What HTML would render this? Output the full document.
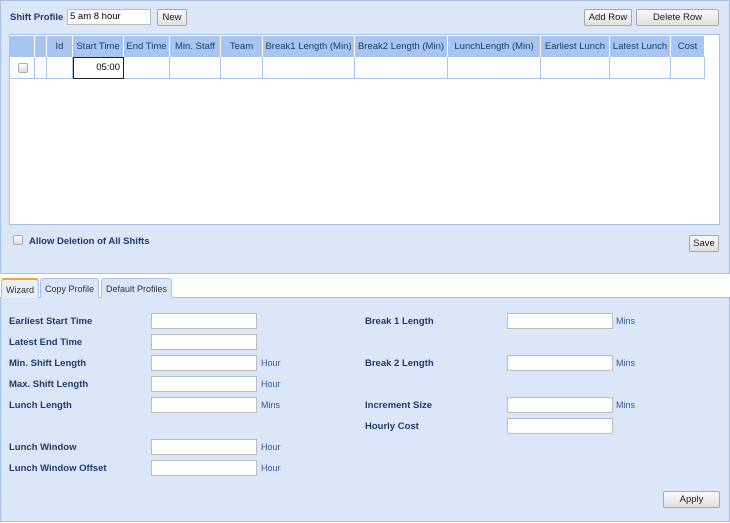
<!DOCTYPE html><html><head><style>
*{box-sizing:border-box}
body{margin:0;width:730px;height:523px;background:#fff;font-family:"Liberation Sans",Tahoma,sans-serif;font-size:9px;position:relative;overflow:hidden}
.a{position:absolute}
.p{background:#dbe6f8;border:1px solid #a7c0e6}
.lb{color:#1f3a6e;font-weight:bold;font-size:9.5px}
.u{color:#2e5a9a;font-size:9px}
.in{background:#fff;border:1px solid #bcbcbc;height:16px}
.btn{background:linear-gradient(#fafafa,#e0e0e0);border:1px solid #a8a8a8;border-radius:2px;color:#222;text-align:center;font-size:9.5px;line-height:15px;height:17px}
.th{background:#a9c4ee;color:#1f3a6e;font-size:9.5px;text-align:center;line-height:21px;height:21px;top:36px;border-right:1px solid #fff}
.td{background:#fff;border-right:1px solid #a9c4ee;border-bottom:1px solid #a9c4ee;top:57px;height:22px}
.cb{width:10px;height:10px;border:1px solid #aaa;border-radius:2px;background:linear-gradient(#fff,#ddd)}
.tab{top:278px;height:20px;border:1px solid #a7c0e6;border-bottom:none;background:#dbe6f8;color:#333;font-size:9px;line-height:20px;text-align:center;border-radius:3px 3px 0 0}
</style></head><body>
<div class="a p" style="left:0;top:0;width:730px;height:274px"></div>
<div class="a lb" style="left:10px;top:12px">Shift Profile</div>
<div class="a in" style="left:67px;top:9px;width:84px;padding-left:2px;font-size:9.5px;line-height:14px">5 am 8 hour</div>
<div class="a btn" style="left:157px;top:9px;width:30px">New</div>
<div class="a btn" style="left:584px;top:9px;width:48px">Add Row</div>
<div class="a btn" style="left:636px;top:9px;width:83px">Delete Row</div>
<div class="a" style="left:9px;top:34px;width:711px;height:191px;background:#fff;border:1px solid #a7c0e6"></div>
<div class="a th" style="left:10px;width:25px"></div>
<div class="a th" style="left:35px;width:12px"></div>
<div class="a th" style="left:47px;width:26px">Id</div>
<div class="a th" style="left:73px;width:51px">Start Time</div>
<div class="a th" style="left:124px;width:46px">End Time</div>
<div class="a th" style="left:170px;width:51px">Min. Staff</div>
<div class="a th" style="left:221px;width:42px">Team</div>
<div class="a th" style="left:263px;width:92px">Break1 Length (Min)</div>
<div class="a th" style="left:355px;width:93px">Break2 Length (Min)</div>
<div class="a th" style="left:448px;width:93px">LunchLength (Min)</div>
<div class="a th" style="left:541px;width:69px">Earliest Lunch</div>
<div class="a th" style="left:610px;width:61px">Latest Lunch</div>
<div class="a th" style="left:671px;width:34px">Cost</div>
<div class="a td" style="left:10px;width:25px"></div>
<div class="a cb" style="left:18px;top:63px"></div>
<div class="a td" style="left:35px;width:12px"></div>
<div class="a td" style="left:47px;width:26px"></div>
<div class="a" style="left:73px;top:57px;width:51px;height:22px;border:1px solid #222;background:#fff;text-align:right;padding-right:3px;line-height:20px;font-size:9.5px">05:00</div>
<div class="a td" style="left:124px;width:46px"></div>
<div class="a td" style="left:170px;width:51px"></div>
<div class="a td" style="left:221px;width:42px"></div>
<div class="a td" style="left:263px;width:92px"></div>
<div class="a td" style="left:355px;width:93px"></div>
<div class="a td" style="left:448px;width:93px"></div>
<div class="a td" style="left:541px;width:69px"></div>
<div class="a td" style="left:610px;width:61px"></div>
<div class="a td" style="left:671px;width:34px"></div>
<div class="a cb" style="left:13px;top:235px"></div>
<div class="a lb" style="left:29px;top:236px">Allow Deletion of All Shifts</div>
<div class="a btn" style="left:689px;top:235px;width:30px">Save</div>
<div class="a" style="left:0;top:297px;width:730px;height:1px;background:#a7c0e6"></div>
<div class="a tab" style="left:1px;width:38px;border-top:2px solid #e8a93a;background:#e9eef6">Wizard</div>
<div class="a tab" style="left:40px;width:59px">Copy Profile</div>
<div class="a tab" style="left:101px;width:71px">Default Profiles</div>
<div class="a p" style="left:0;top:298px;width:730px;height:224px;border-top:none"></div>
<div class="a lb" style="left:9px;top:316px">Earliest Start Time</div><div class="a in" style="left:151px;top:313px;width:106px"></div>
<div class="a lb" style="left:9px;top:337px">Latest End Time</div><div class="a in" style="left:151px;top:334px;width:106px"></div>
<div class="a lb" style="left:9px;top:358px">Min. Shift Length</div><div class="a in" style="left:151px;top:355px;width:106px"></div><div class="a u" style="left:261px;top:358px">Hour</div>
<div class="a lb" style="left:9px;top:379px">Max. Shift Length</div><div class="a in" style="left:151px;top:376px;width:106px"></div><div class="a u" style="left:261px;top:379px">Hour</div>
<div class="a lb" style="left:9px;top:400px">Lunch Length</div><div class="a in" style="left:151px;top:397px;width:106px"></div><div class="a u" style="left:261px;top:400px">Mins</div>
<div class="a lb" style="left:9px;top:442px">Lunch Window</div><div class="a in" style="left:151px;top:439px;width:106px"></div><div class="a u" style="left:261px;top:442px">Hour</div>
<div class="a lb" style="left:9px;top:463px">Lunch Window Offset</div><div class="a in" style="left:151px;top:460px;width:106px"></div><div class="a u" style="left:261px;top:463px">Hour</div>
<div class="a lb" style="left:365px;top:316px">Break 1 Length</div><div class="a in" style="left:507px;top:313px;width:106px"></div><div class="a u" style="left:616px;top:316px">Mins</div>
<div class="a lb" style="left:365px;top:358px">Break 2 Length</div><div class="a in" style="left:507px;top:355px;width:106px"></div><div class="a u" style="left:616px;top:358px">Mins</div>
<div class="a lb" style="left:365px;top:400px">Increment Size</div><div class="a in" style="left:507px;top:397px;width:106px"></div><div class="a u" style="left:616px;top:400px">Mins</div>
<div class="a lb" style="left:365px;top:421px">Hourly Cost</div><div class="a in" style="left:507px;top:418px;width:106px"></div>
<div class="a btn" style="left:663px;top:491px;width:57px">Apply</div>
</body></html>
